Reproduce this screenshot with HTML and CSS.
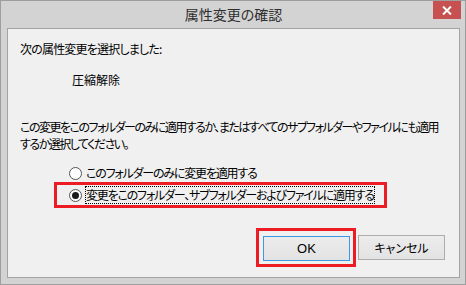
FILE: index.html
```html
<!DOCTYPE html>
<html lang="ja">
<head>
    <meta charset="UTF-8">
    <title>属性変更の確認</title>
    <link rel="stylesheet" href="styles.css">
</head>
<body>
    <div class="window">
        <div class="titlebar">
            <span class="title">属性変更の確認</span>
            <span class="close">
                <svg width="10" height="9" viewBox="0 0 10 9"><path d="M1 0.5 L9 8.5 M9 0.5 L1 8.5" stroke="#fff" stroke-width="2"/></svg>
            </span>
        </div>
        <div class="content">
            <p class="line">次の属性変更を選択しました:</p>
            <p class="line change">圧縮解除</p>
            <p class="question">この変更をこのフォルダーのみに適用するか、またはすべてのサブフォルダーやファイルにも適用するか選択してください。</p>

            <div class="options">
                <label class="option plain">
                    <span class="radio"></span>
                    <span class="option-text">このフォルダーのみに変更を適用する</span>
                </label>
                <label class="option marked">
                    <span class="radio checked"></span>
                    <span class="option-text focus">変更をこのフォルダー、サブフォルダーおよびファイルに適用する</span>
                </label>
            </div>

            <div class="buttons">
                <div class="mark-box">
                    <button class="btn default">OK</button>
                </div>
                <button class="btn">キャンセル</button>
            </div>
        </div>
    </div>
</body>
</html>
```

FILE: styles.css
```css
body {
    margin: 0;
    font-family: "Noto Sans CJK JP", "Noto Sans", sans-serif;
    font-size: 12px;
    color: #000;
    background: #fff;
}
.window {
    width: 466px;
    height: 285px;
    box-sizing: border-box;
    border: 1px solid #9e9e9e;
    background-color: #d3d3d3;
    padding: 0 5px 6px 6px;
    display: flex;
    flex-direction: column;
}
.titlebar {
    height: 27px;
    position: relative;
    display: flex;
    justify-content: center;
    align-items: center;
}
.title {
    font-size: 14px;
    color: #2f2f2f;
    margin-top: -2px;
    font-feature-settings: "palt";
}
.close {
    position: absolute;
    top: 0;
    right: -1px;
    width: 28px;
    height: 18px;
    background-color: #c75050;
    display: flex;
    justify-content: center;
    align-items: center;
}
.content {
    flex: 1;
    border: 1px solid #a3a3a3;
    background-color: #f0f0f0;
    padding: 12px 12px 0 12px;
    font-feature-settings: "palt";
    letter-spacing: -0.8px;
}
.line {
    margin: 0;
    line-height: 16px;
}
.change {
    margin: 15px 0 0 52px;
    letter-spacing: 0;
}
.question {
    margin: 30px 0 0 0;
    line-height: 17px;
    letter-spacing: -1.5px;
}
.options {
    margin-top: 12px;
    display: flex;
    flex-direction: column;
    align-items: flex-start;
    letter-spacing: -1.2px;
}
.option {
    display: flex;
    align-items: center;
    gap: 3px;
}
.plain {
    margin-left: 49px;
}
.marked {
    margin: 0 0 0 34px;
    border: 3px solid #ec1c24;
    padding: 1px 9px 1px 12px;
}
.radio {
    width: 11px;
    height: 11px;
    border: 1px solid #555;
    border-radius: 50%;
    background: #fff;
    display: flex;
    justify-content: center;
    align-items: center;
}
.checked::after {
    content: "";
    width: 7px;
    height: 7px;
    border-radius: 50%;
    background: #1a1a1a;
}
.option-text {
    line-height: 16px;
    border: 1px solid transparent;
}
.focus {
    border: 1px dotted #000;
}
.buttons {
    margin-top: 20px;
    display: flex;
    justify-content: flex-end;
    align-items: center;
    gap: 2px;
    padding-right: 2px;
    letter-spacing: 0;
}
.mark-box {
    border: 3px solid #ec1c24;
    padding: 5px 3px 3px 4px;
}
.btn {
    width: 87px;
    height: 25px;
    font-family: "Liberation Sans", "Noto Sans CJK JP", sans-serif;
    font-size: 12px;
    color: #000;
    background: linear-gradient(#ececec, #e3e3e3);
    border: 1px solid #adadad;
    padding: 0;
    font-feature-settings: "palt";
}
.default {
    border-color: #3c98e6;
    font-size: 13px;
}
```
